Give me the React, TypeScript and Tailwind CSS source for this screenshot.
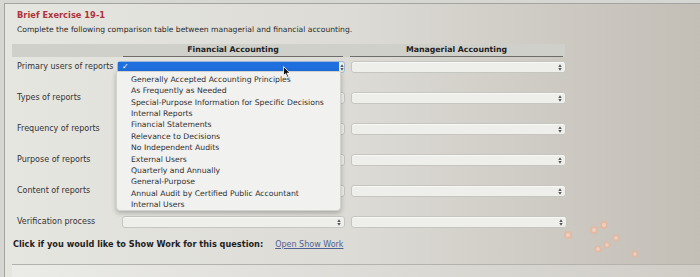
import clsx from "clsx"

const rowLabels = [
  "Primary users of reports",
  "Types of reports",
  "Frequency of reports",
  "Purpose of reports",
  "Content of reports",
]

const options = [
  "Generally Accepted Accounting Principles",
  "As Frequently as Needed",
  "Special-Purpose Information for Specific Decisions",
  "Internal Reports",
  "Financial Statements",
  "Relevance to Decisions",
  "No Independent Audits",
  "External Users",
  "Quarterly and Annually",
  "General-Purpose",
  "Annual Audit by Certified Public Accountant",
  "Internal Users",
]

// little up/down arrows at the right of a select
function Arrows({ color = "#555" }: { color?: string }) {
  return (
    <svg width="4" height="7" viewBox="0 0 4 7">
      <path d="M2 0.3L3.7 2.9H0.3Z M2 6.7L3.7 4.1H0.3Z" fill={color} />
    </svg>
  )
}

function SelectBox({ className }: { className?: string }) {
  return (
    <div
      className={clsx(
        "h-[12px] rounded-[3px] border border-[#c6c6c1] bg-[#eeeeea] flex items-center justify-end pr-[3px] shadow-[inset_0_1px_0_#f8f8f6]",
        className
      )}
    >
      <Arrows />
    </div>
  )
}

function Cursor() {
  return (
    <svg width="8" height="12" viewBox="0 0 8 12" className="absolute left-[283px] top-[66px]">
      <path d="M0.5 0.5L0.5 9.5L2.6 7.6L4.2 11.2L5.6 10.6L4.1 7.1L7 7.1Z" fill="#111" stroke="#fff" strokeWidth="0.8" />
    </svg>
  )
}

function Flares() {
  const dots = [
    [568, 235, 4],
    [594, 230, 4],
    [604, 225, 4],
    [616, 238, 3.6],
    [607, 245, 3.4],
    [598, 249, 3.6],
    [635, 254, 3.4],
  ]
  return (
    <svg width="700" height="277" className="absolute left-0 top-0 pointer-events-none">
      {dots.map(([x, y, r], i) => (
        <g key={i}>
          <circle cx={x} cy={y} r={r} fill="#e9b49a" opacity="0.75" />
          <circle cx={x} cy={y} r={r * 0.5} fill="#efd3c4" opacity="0.9" />
        </g>
      ))}
    </svg>
  )
}

export default function App() {
  return (
    <div className="relative w-[700px] h-[277px] overflow-hidden bg-[#d6d6d2] font-['DejaVu_Sans',sans-serif] text-[#333]">
      <div className="ml-[4px] mt-[3px] h-[274px] border-l border-t border-[#a3a3a0] bg-linear-to-r from-[#e6e6e1] via-[#dcdbd5] to-[#c3beb6] flex flex-col">
        <div className="pl-[12px] pr-[130px] flex flex-col">
          <div className="mt-[6px] text-[8.3px] leading-[11px] font-bold text-[#b0323c]">Brief Exercise 19-1</div>
          <div className="mt-[3.5px] text-[7.6px] leading-[9px] text-[#2a2a2a] whitespace-nowrap">
            Complete the following comparison table between managerial and financial accounting.
          </div>

          {/* header band */}
          <div className="mt-[10.5px] ml-[-5px] w-[553px] h-[13px] bg-[#d0d0ca] flex">
            <div className="w-[111px]" />
            <div className="w-[220px] border-b border-[#6d6d6a] flex items-center justify-center text-[7.8px] font-bold text-[#222]">
              Financial Accounting
            </div>
            <div className="w-[7px]" />
            <div className="w-[213px] border-b border-[#6d6d6a] flex items-center justify-center text-[7.8px] font-bold text-[#222]">
              Managerial Accounting
            </div>
          </div>

          {rowLabels.map((label, i) => (
            <div key={label} className="h-[31px] flex items-start pt-[4px]">
              <div className="w-[105px] h-[12px] flex items-center text-[8px] whitespace-nowrap">{label}</div>
              {i === 0 ? (
                <div className="ml-[-5px] w-[228px] h-[12px] rounded-[3px] border border-[#9db6d8] bg-[#eeeeea] flex items-center">
                  <div className="w-[221px] h-[10px] bg-[#1f6fde] flex items-center pl-[4px] text-[8px] font-bold leading-none text-white">✓</div>
                  <div className="flex-1 flex justify-center">
                    <Arrows />
                  </div>
                </div>
              ) : (
                <SelectBox className="w-[223px]" />
              )}
              <SelectBox className="ml-[6px] w-[215px]" />
            </div>
          ))}

          <div className="h-[23px] flex items-start pt-[4px]">
            <div className="w-[105px] h-[12px] flex items-center text-[8px] whitespace-nowrap">Verification process</div>
            <SelectBox className="w-[223px]" />
            <SelectBox className="ml-[6px] w-[216px]" />
          </div>

          <div className="mt-[5px] ml-[-4px] h-[9px] flex items-center whitespace-nowrap">
            <span className="text-[8.2px] font-bold text-[#1e1e1e]">Click if you would like to Show Work for this question:</span>
            <span className="ml-[12px] text-[8px] text-[#4d6396] underline">Open Show Work</span>
          </div>
        </div>

        <div className="mt-auto ml-[7px] h-[13px] border-t border-[#b3b2ad] bg-linear-to-r from-[#ebebe8] to-[#d0cdc7]" />
      </div>

      {/* open dropdown list */}
      <div className="absolute left-[116px] top-[71px] w-[225px] h-[140px] rounded-b-[4px] bg-[#f1f1ef] shadow-[0_2px_5px_rgba(0,0,0,0.25)] border border-[#d2d2ce] pt-[2px]">
        {options.map((o) => (
          <div key={o} className="h-[11.4px] pl-[14px] flex items-center text-[7.7px] whitespace-nowrap text-[#303030]">
            {o}
          </div>
        ))}
      </div>

      <Cursor />
      <Flares />
    </div>
  )
}
